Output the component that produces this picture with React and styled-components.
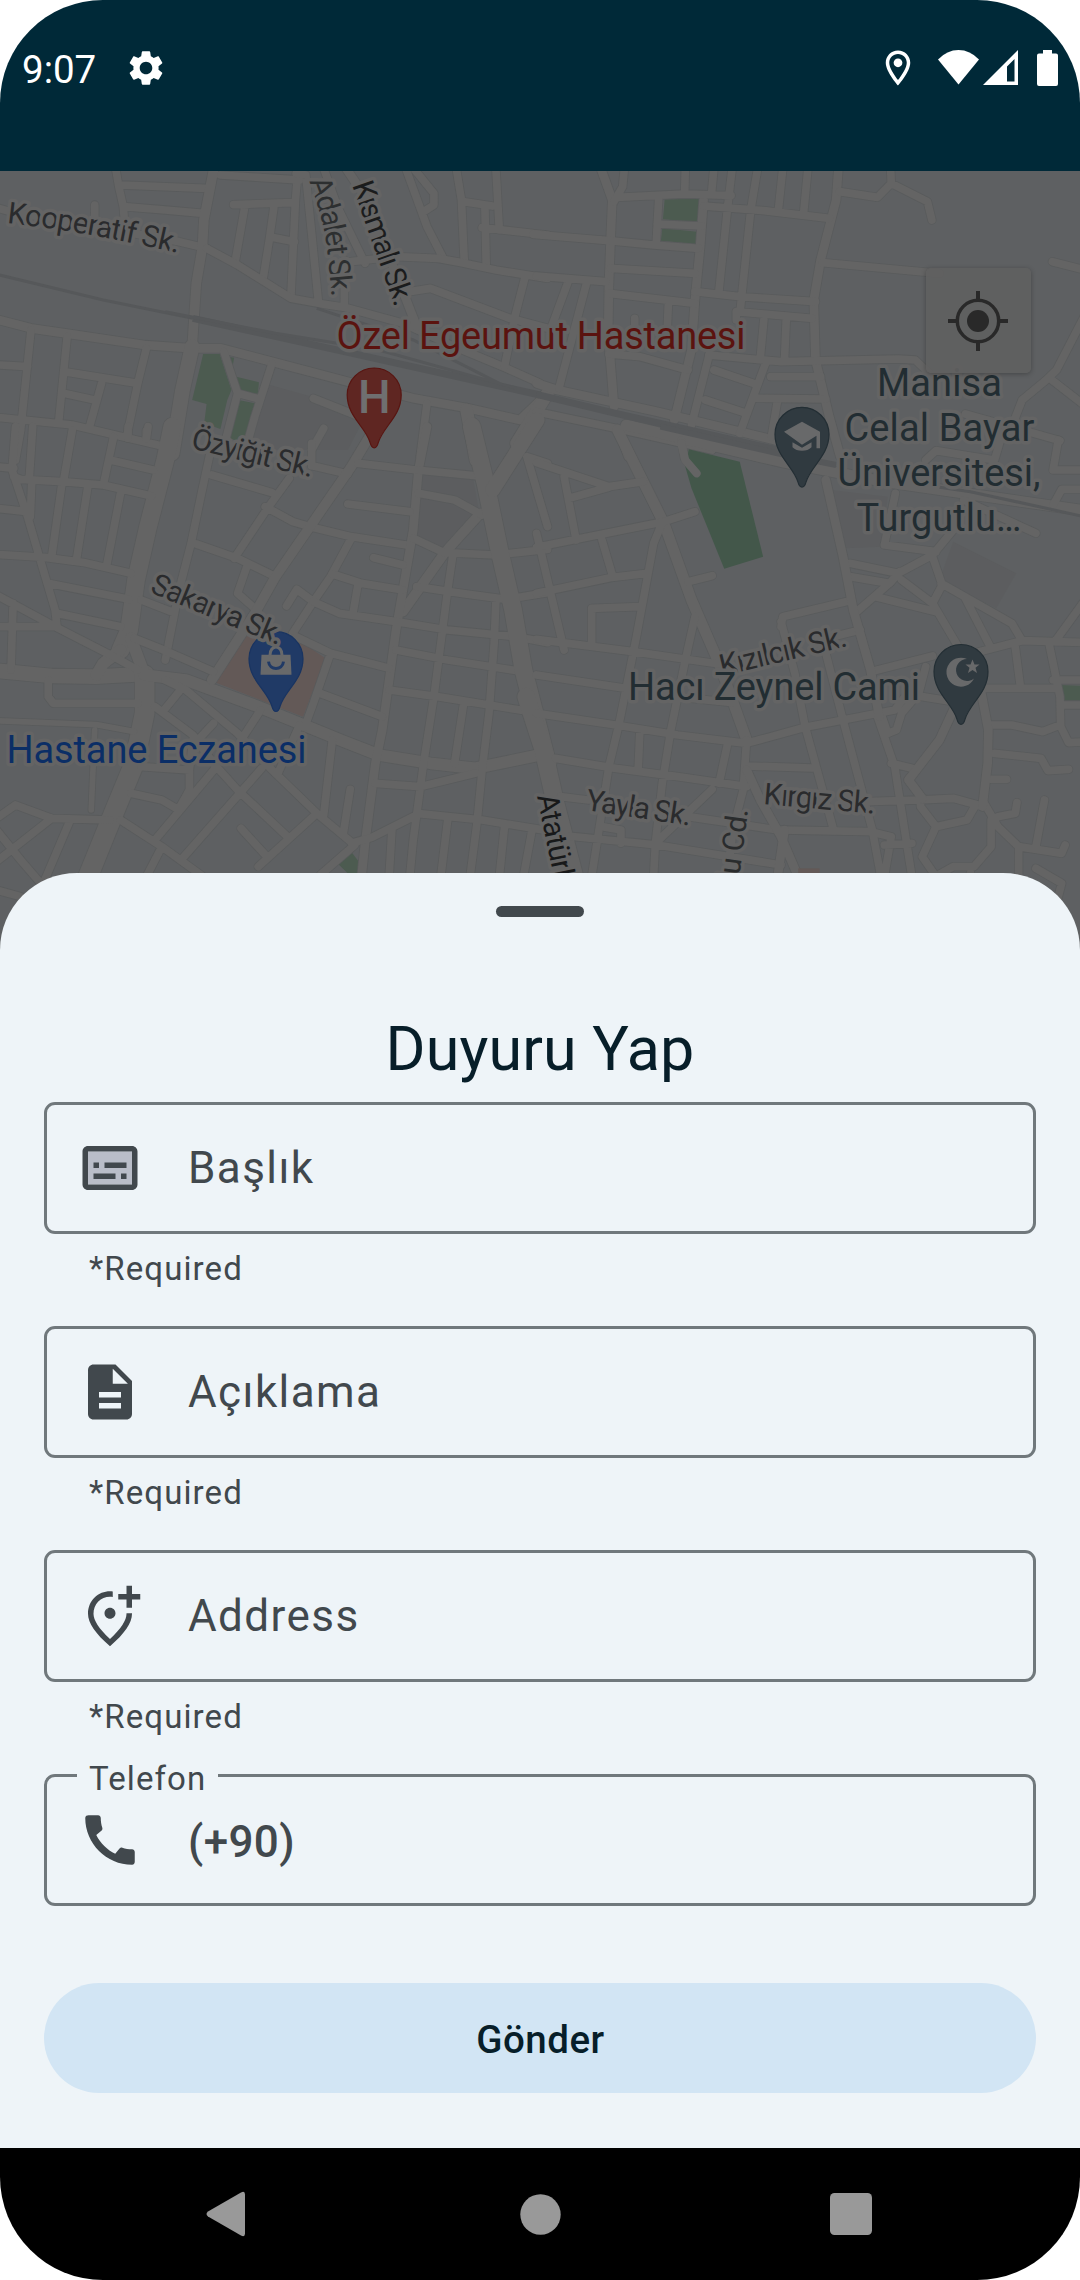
import React from "react";
import styled, { createGlobalStyle } from "styled-components";

const GlobalStyle = createGlobalStyle`
  *, *::before, *::after { box-sizing: border-box; }
  body { margin: 0; background: #ffffff; }
`;

const Screen = styled.div`
  width: 1080px;
  height: 2280px;
  display: flex;
  flex-direction: column;
  overflow: hidden;
  border-radius: 103px;
  font-family: Roboto, "Noto Sans", sans-serif;
  background: #ffffff;
`;

const StatusBar = styled.header`
  height: 171px;
  flex: none;
  display: flex;
  justify-content: space-between;
  align-items: flex-start;
  padding: 0 22px;
  background: #002938;
  color: #ffffff;
`;

const StatusGroup = styled.div`
  height: 135px;
  display: flex;
  align-items: center;
  gap: ${(p) => p.$gap}px;
`;

const Clock = styled.span`
  font-size: 38.5px;
  line-height: 46px;
  padding-top: 4px;
`;

const Icon = styled.svg`
  display: block;
  flex: none;
  width: ${(p) => p.$w}px;
  height: ${(p) => p.$h || p.$w}px;
  margin-left: ${(p) => p.$ml || 0}px;
  fill: currentColor;
`;

const Stage = styled.main`
  position: relative;
  flex: 1;
  display: flex;
  flex-direction: column;
  justify-content: flex-end;
  overflow: hidden;
  background: #5e6062;
`;

const MapCanvas = styled.svg`
  position: absolute;
  top: 0;
  left: 0;
  width: 1080px;
  height: 800px;
  display: block;
`;

const PlaceText = styled.text`
  font: 400 ${(p) => p.$size || 38}px Roboto, sans-serif;
  fill: ${(p) => p.$color};
  stroke: #646464;
  stroke-width: 7px;
  stroke-linejoin: round;
  paint-order: stroke;
`;

const LocateButton = styled.button`
  position: absolute;
  left: 926px;
  top: 97px;
  width: 105px;
  height: 105px;
  display: grid;
  place-items: center;
  padding: 0 1px 0 0;
  border: 0;
  border-radius: 5px;
  background: rgba(96, 96, 96, 0.93);
  color: #292929;
  box-shadow: 0 1px 5px rgba(0, 0, 0, 0.28);
`;

const Sheet = styled.section`
  position: relative;
  height: 1275px;
  display: flex;
  flex-direction: column;
  padding: 33px 44px 0;
  border-radius: 77px 77px 0 0;
  background: #eef4f8;
`;

const Handle = styled.div`
  align-self: center;
  width: 88px;
  height: 11px;
  border-radius: 6px;
  background: #41484d;
`;

const Title = styled.h1`
  margin: 94px 0 14px;
  font-size: 61px;
  line-height: 77px;
  font-weight: 400;
  letter-spacing: 0.15px;
  text-align: center;
  color: #071e29;
`;

const Form = styled.form`
  display: flex;
  flex-direction: column;
`;

const FieldBlock = styled.div`
  height: ${(p) => (p.$last ? 132 : 224)}px;
`;

const FieldBox = styled.label`
  position: relative;
  display: flex;
  align-items: center;
  gap: 45px;
  height: 132px;
  padding-left: 30px;
  border: 3px solid #70787c;
  border-radius: 11px;
  color: #41484d;
`;

const Placeholder = styled.span`
  font-size: 44px;
  line-height: 66px;
  letter-spacing: 1.42px;
`;

const Prefix = styled.span`
  padding-top: 3px;
  font-size: 44px;
  line-height: 66px;
  font-weight: 500;
  letter-spacing: 0.4px;
`;

const FloatingLabel = styled.span`
  position: absolute;
  left: 30px;
  top: -20px;
  padding: 0 12px;
  font-size: 33px;
  line-height: 44px;
  letter-spacing: 1.1px;
  background: #eef4f8;
`;

const Support = styled.div`
  padding: 13px 0 0 45px;
  font-size: 33px;
  line-height: 44px;
  letter-spacing: 1.1px;
  color: #41484d;
`;

const Submit = styled.button`
  height: 110px;
  margin-top: 77px;
  padding: 3px 0 0 1px;
  border: 0;
  border-radius: 55px;
  background: #d2e5f4;
  color: #071e29;
  font: 500 38.5px/50px Roboto, sans-serif;
  letter-spacing: 0.5px;
`;

const NavBar = styled.nav`
  height: 132px;
  flex: none;
  display: flex;
  justify-content: space-between;
  align-items: center;
  padding: 0 208px 0 206px;
  background: #000000;
  color: #999999;
`;

/* ---------- map data, one entry per map tile ---------- */

const TILES = [
  {
    transform: "translate(0 -171) scale(0.34436 0.33333)",
    roads: [
      [8, "M-20 620L30 635L520 725L600 745 M275 615V670 M335 500L345 560L358 620L362 670 M350 555L600 565 M360 620L480 630L590 640 M640 525L870 540 M865 515L858 600L845 885 M678 614L850 608 M710 625L683 785 M795 625L782 720L765 830 M790 712L855 725"],
      [10, "M622 500L592 660L588 740L570 850L558 1040"],
      [8, "M600 745L690 795L760 840L845 895L925 910L1000 922L1170 970L1320 1040L1460 1100L1568 1150 M860 520L888 525L905 700L925 910 M940 505L980 620L1060 790 M1000 780V920 M1180 510L1240 680L1285 770 M1205 510L1260 580V615L1230 635 M1325 505L1340 600L1348 780 M1345 605L1430 618 M1440 505L1450 690 M1408 615L1412 800 M1400 683L1590 705"],
      [9, "M1005 505L1060 590L1180 900L1210 980"],
      [8, "M1020 785L1150 770L1270 775L1340 788L1440 810L1590 835 M1190 875L1250 865L1480 955L1590 985 M1525 830L1495 950L1465 1100"],
      [9, "M-10 958L90 985L190 1000L420 1035L560 1045L640 1045L790 1085L1010 1145L1200 1195L1360 1225L1510 1260L1590 1180"],
      [8, "M90 990L60 1290L45 1380 M195 1010L170 1270 M425 1045L400 1150L370 1300 M0 1095L80 1100 M185 1115L400 1150 M185 1180L275 1200 M295 1150L260 1280 M-10 1252L210 1275L480 1340 M425 1292V1320 M650 1055L690 1180L650 1340 M690 1180L745 1195 M790 1090L740 1250L710 1360 M910 1195L1020 1240L1080 1270 M940 1285L905 1350 M1240 1210L1220 1370"],
      [15, "M558 1040L530 1170L500 1360"],
      [13, "M1355 1230L1382 1380 M1590 1180L1500 1330"],
    ],
    rail: [[3, "M-10 823L300 900L560 955"], [7, "M560 955L1000 1055L1568 1185"], [3, "M480 935L800 1000L1100 1050L1500 1165 M920 925L1200 1020L1450 1150"]],
    parks: ["590,1062 638,1062 672,1170 660,1200 640,1287 593,1270 600,1212 558,1200", "663,1070 680,1073 676,1095", "686,1130 752,1147 748,1188 690,1170", "682,1198 740,1210 720,1310 690,1325 660,1310"],
  },
  {
    transform: "translate(540 -171) scale(0.34436 0.33333)",
    roads: [
      [9, "M175 500L210 600L205 720L200 860L198 1000L215 1220 M475 600L465 740L450 900L440 1050L390 1260 M867 500L860 600L815 780L795 900L800 1080L840 1250L872 1370 M-10 1150L50 1170L340 1235L680 1320L800 1350"],
      [8, "M245 505L240 560L215 605 M225 592L420 582L555 586 M422 505L420 582 M505 505L498 582 M558 505L545 620L520 870 M632 505L612 630L582 925 M705 505L692 632 M778 505L765 645 M475 618L650 632L840 655 M345 590L338 720 M340 672L470 678 M-20 703L200 722L330 735L460 745 M870 575L980 592L1020 550L1125 605L1138 660 M1018 500L1020 550 M820 788L1160 820 M205 805L450 820 M-10 828L190 845 M80 850L30 990 M135 850L55 1165 M200 880L450 910 M450 875L580 890L800 905 M373 905L370 975 M275 955V1010 M570 935L790 955 M570 935V960 M650 960L640 1070 M715 960L710 1080 M490 1065L700 1085L1040 1077L1090 1080L1135 1125 M200 1062L290 1070L430 1110 M490 1070L440 1275 M655 1090L580 1300 M505 1110L620 1150 M670 1130L815 1130 M630 1195L830 1197 M480 1200L600 1240 M690 1200L672 1310 M-10 1235L220 1285L500 1350 M225 1285L255 1370 M1488 785L1590 812 M1590 930L1500 1110L1470 1140L1400 1200L1370 1280 M1480 1135L1580 1215 M1235 1242L1510 1322"],
    ],
    rail: [[7, "M-10 1183L220 1240L690 1350"]],
    parks: ["362,598 465,597 462,667 357,658", "355,685 457,695 455,733 351,722"],
  },
  {
    transform: "translate(0 259) scale(0.34436 0.33333)",
    roads: [
      [18, "M500 -10L480 90L430 290L395 450L375 600L350 660"],
      [15, "M-10 722L150 738L280 740L420 732"],
      [20, "M420 735L420 850L390 1000L330 1150L240 1380"],
      [12, "M350 660L300 700L280 735 M420 735L540 750L750 830L870 880L1000 935L1100 975L1250 1000L1380 1015L1590 970 M380 625L420 735"],
      [8, "M45 -10L35 120L80 260L120 400L160 540L165 585 M95 -10L85 145 M-10 110L40 115 M40 140L60 148L180 155L300 165L440 198 M210 0L185 150 M330 20L300 165 M372 -10V25 M430 -10L425 25 M320 90L445 120 M180 160L150 380 M255 170L222 390 M350 190L310 405 M92 160L88 260 M-10 235L80 245 M-10 373L130 382L240 397L380 430 M140 460L375 508 M165 550L350 590 M-10 495L160 590L330 680L400 720 M-10 590H165 M38 520L32 720 M140 750V800L155 820H400 M410 510L505 548 M612 60L585 190L555 340L520 480L480 690 M615 135L790 188 M840 145L780 230L680 385 M910 108L1010 132 M905 40V108 M770 230L850 275L900 290L1020 320L1180 345 M570 342L690 385L800 440 M720 400L690 490L745 540 M832 528L862 478L910 515 M1020 325L960 440L910 515L850 610"],
      [10, "M1090 -10L1020 110L900 290L800 440L740 550L615 750 M1395 250L1290 370L1170 545"],
      [9, "M1240 -10L1215 120L1200 300L1180 420L1150 600L1130 750L1110 900L1090 1000L1060 1240L1050 1340"],
      [8, "M910 515L985 550L1150 575L1300 600L1500 620L1590 638 M965 432L1050 460L1170 480 M1040 460L1025 550 M1085 383L1170 405 M1010 222L1190 245 M1040 100L1210 120L1390 138 M1215 190L1320 210L1400 255 M1200 325L1290 368L1440 375L1590 358 M1210 470L1340 490L1470 508L1590 488 M1315 375L1300 480L1285 600L1260 800L1230 1000L1200 1230L1190 1340 M1530 80L1590 290 M1530 80L1590 100 M1440 510L1435 640L1420 850L1400 1020L1385 1180L1365 1340 M1150 660L1300 690L1520 725 M1130 780L1270 800L1540 845 M1345 830L1320 1000 M860 620L960 670L1130 715 M960 670L910 820L885 890 M930 790L1110 860 M390 625L480 662L620 725 M757 840L700 930 M870 885L805 1035 M450 830L560 915L620 1000L690 1080L840 1225 M480 750L540 780L690 910L790 1020L920 1150L1030 1245 M520 785L475 842 M620 880L575 930 M410 1010L550 1020L560 930 M550 1020V1080L520 1135 M625 1015L450 1230 M760 1015L530 1285 M920 1150L750 1310 M380 1090L470 1110L520 1140 M350 1170L470 1250L590 1340 M470 1250L420 1350 M700 1195L775 1280 M965 930L940 1155 M1017 1078L997 1210 M1020 1240L1080 1222L1210 1155 M1030 1245L930 1335 M1090 1060L1220 1070L1380 1030 M1210 1150L1400 1170L1590 1202 M1138 1200L1130 1340 M1300 1170L1280 1340 M1465 1190L1450 1340 M1545 1200L1520 1340 M-10 1165L45 1125L150 1165L320 1170 M-10 1295L150 1165 M-10 1200L60 1290L110 1350 M200 1180L130 1350 M-10 1380L60 1400"],
      [6, "M-10 872L280 884L390 905 M275 900L265 1140"],
      [18, "M1370 -10L1410 160L1450 360L1490 540L1520 720L1590 1000"],
      [15, "M1560 -30L1430 180"],
    ],
    rail: [],
    parks: ["980,1300 1020,1265 1042,1295 1038,1335 1015,1335"],
  },
  {
    transform: "translate(540 259) scale(0.34436 0.33333)",
    roads: [
      [11, "M225 0L360 280L440 510L520 700L600 930 M250 -15L700 95L1000 155L1568 240"],
      [18, "M-40 800L10 960L45 1120L110 1380"],
      [8, "M410 30L420 85L455 130 M-10 98L200 170L300 155 M70 140L105 330 M85 205L200 172 M-10 352L360 275L450 245 M180 330L210 435 M-10 490L210 442L310 430 M350 290L330 340L280 620L230 880L200 1010L150 1340 M430 455L500 437 M-10 310L70 660 M150 645V535L290 530 M-10 628L270 665L520 702 M450 560L420 700L380 900L355 1060L335 1240L330 1340 M-10 735L250 775 M-10 850L220 885L400 915L600 940 M390 800L560 818 M600 940L770 892L1030 840L1060 800 M290 900L285 1020 M45 985L220 1015L400 1040L600 1070 M545 940L520 1060 M600 930L590 1080L560 1200L545 1340 M600 1008L790 1014 M770 890L850 1190 M880 870L965 1200L990 1340 M980 860L1030 1010L1080 1340 M700 1200L960 1205L1020 1220L1000 1340 M1000 1245L1080 1240 M950 1115L1100 1110L1200 1105L1290 1130 M430 1160L690 1200 M500 1078L340 1235 M60 1100L140 1110 M80 1218L340 1245L700 1305 M180 1190L235 1200V1240 M900 400L1040 430L1140 375L1200 300 M900 440L1015 460L1045 425 M1140 380L1168 465L1140 520 M1050 450L1140 520L1220 660 M920 545L1020 455 M975 500L1150 545 M700 590L705 560L900 512 M700 575L740 730L770 890 M830 670L880 870 M850 620L930 600 M960 725L1140 678 M1165 460L1370 580L1400 632L1590 638 M1235 505L1310 655 M1220 680L1400 632 M1495 635L1590 500 M1380 650L1395 770 M1478 640L1510 800L1512 890L1535 938L1590 935 M1290 775H1500 M1490 750H1590 M1515 825H1590 M1310 885L1370 885L1460 905L1510 885 M1320 970L1455 985L1475 1022L1535 1018 M1310 1048H1355 M1020 1000L1080 1015 M1110 800L1200 815 M1120 710L1100 790L1050 850L1035 900L1010 910L990 850 M1105 1100V1130L1150 1190L1240 1170L1265 1125 M1150 1190L1110 1280L1150 1340 M1290 1120L1330 1190L1390 1250V1340 M1330 1160L1380 1150L1385 1118 M1465 1110L1440 1250 M1390 1250L1515 1270L1525 1245 M1310 1170V1250L1260 1310L1200 1310L1130 1350 M1250 1330L1240 1400 M1032 190L1000 345L1150 365 M1120 90L1150 62L1320 90L1340 20 M1505 30L1490 120H1590 M1490 225L1515 178H1590 M1230 210L1440 310 M1440 1315L1515 1360L1500 1420"],
      [9, "M600 1020L640 1110L700 1220L750 1340 M710 1200L690 1340 M830 150L880 380L910 540L960 720L985 860 M1280 780L1302 900L1300 1000L1285 1130 M1205 830L1160 930L1070 1050L1110 1105"],
    ],
    rail: [[6, "M350 -10L690 70L860 105"], [3, "M1160 172L1250 185L1590 262"]],
    parks: ["1510,765 1590,768 1590,815 1520,818"],
  },
];

const STREETS = [
  ["kooperatif", "M7 52Q90 61 190 85", "Kooperatif Sk.", "#2a2b2d", 174],
  ["adalet", "M309 10Q323 46 327 76L333 140", "Adalet Sk.", "#2d2f30", 119],
  ["kismali", "M352 14L402 156", "Kısmalı Sk.", "#1b1c1d", 130],
  ["ozyigit", "M190 277L335 312", "Özyiğit Sk.", "#2a2b2d", 125],
  ["sakarya", "M149 421L290 479", "Sakarya Sk.", "#2a2b2d", 140],
  ["kizilcik", "M722 505L865 471", "Kızılcık Sk.", "#2a2b2d", 130],
  ["yayla", "M585 639L705 657", "Yayla Sk.", "#2a2b2d", 106],
  ["kirgiz", "M763 633L890 644", "Kırgız Sk.", "#2a2b2d", 112],
  ["ataturk", "M537 625L563 751", "Atatürk", "#18191a", 92],
  ["cadde", "M738.500 711L750 625", "lu Cd.", "#2a2c2d", 73],
];

const HOSPITAL = "#5b130f";
const SLATE = "#222d32";

const PLACES = [
  ["Özel Egeumut Hastanesi", 541, 177.5, 409, HOSPITAL],
  ["Hastane Eczanesi", 156.500, 591.7, 300, "#0b2e66"],
  ["Manisa", 939.5, 224.7, 125, SLATE],
  ["Celal Bayar", 939.5, 269.7, 190, SLATE],
  ["Üniversitesi,", 939, 314.7, 203, SLATE],
  ["Turgutlu…", 939, 359.7, 165, SLATE],
  ["Hacı Zeynel Cami", 774, 529.3, 292, SLATE],
];

const PIN =
  "M0 52.800c-2.400 0-3.200-2-4-5C-8.500 32-27 21.500-27 0a27 27 0 0 1 54 0C27 21.500 8.500 32 4 47.800c-.8 3-1.600 5-4 5z";

function Pin({ x, y, fill, edge, children }) {
  return (
    <g transform={`translate(${x} ${y})`}>
      <path d={PIN} fill={fill} stroke={edge} strokeWidth="1.2" />
      {children}
    </g>
  );
}

function CityMap() {
  return (
    <MapCanvas viewBox="0 0 1080 800">
      <rect width="1080" height="800" fill="#5e6062" />
      <g fill="#5c5d5f">
        <g transform={TILES[0].transform}>
          <polygon points="785,1155 905,1190 1060,1250 1010,1350 700,1350 740,1250" />
        </g>
        <g transform={TILES[3].transform}>
          <polygon points="1200,335 1383,430 1325,535 1160,450" />
          <polygon points="845,180 1010,200 990,350 885,355" />
        </g>
        <g transform={TILES[2].transform}>
          <polygon points="1225,130 1375,150 1390,240 1290,370 1205,310" />
        </g>
      </g>
      {TILES.map((t, i) => (
        <g key={i} transform={t.transform} fill="#4c5b50">
          {t.parks.map((p) => (
            <polygon key={p} points={p} />
          ))}
        </g>
      ))}
      <g transform={TILES[2].transform}>
        <polygon points="715,610 880,640 945,685 880,860 620,755" fill="#635957" />
      </g>
      {["casing", "fill"].map((layer) => (
        <g key={layer} fill="none" strokeLinecap="round" strokeLinejoin="round" stroke={layer === "casing" ? "#595b5c" : "#646464"}>
          {TILES.map((t, i) => (
            <g key={i} transform={t.transform}>
              {t.roads.map(([w, d], k) => (
                <path key={k} d={d} strokeWidth={layer === "casing" ? w + 1.3 : w - 0.3} vectorEffect="non-scaling-stroke" />
              ))}
            </g>
          ))}
        </g>
      ))}
      <g fill="none" stroke="#56585a">
        {TILES.map((t, i) => (
          <g key={i} transform={t.transform}>
            {t.rail.map(([w, d]) => (
              <path key={d} d={d} strokeWidth={w} vectorEffect="non-scaling-stroke" />
            ))}
          </g>
        ))}
      </g>
      <g transform={TILES[3].transform}>
        <polygon points="432,58 580,95 648,380 535,416 440,175 422,110" fill="#43574a" />
        <path d="M410 40L422 90L455 130" fill="none" stroke="#646464" strokeWidth="8" strokeLinecap="round" vectorEffect="non-scaling-stroke" />
        <rect x="750" y="1315" width="62" height="25" fill="#635957" />
      </g>

      <Pin x={374.200} y={224} fill="#5f2622" edge="#581511">
        <text x="0" y="17.700" textAnchor="middle" fontFamily="Roboto" fontWeight="500" fontSize="46" fill="#6f6f70">H</text>
      </Pin>
      <Pin x={802} y={263.300} fill="#303a40" edge="#232e34">
        <path d="M-18-2.500L0-12.500L18-2.500V14H14.500V1.500L0 10.500z M-9.500 8L0 13.500L9.500 8V13Q6 16.500 0 16.500T-9.500 13z" fill="#68696a" />
      </Pin>
      <Pin x={276} y={487.700} fill="#203a66" edge="#193461">
        <path d="M-14.500-4H14.500L15.500 16H-15.500z" fill="#68696a" />
        <path d="M-6-3.500C-6-14.500 6-14.500 6-3.500" fill="none" stroke="#68696a" strokeWidth="3" />
        <path d="M-7.500 3C-6.500 12 6.500 12 7.500 3" fill="none" stroke="#203a66" strokeWidth="3" />
      </Pin>
      <Pin x={961} y={500.500} fill="#303a40" edge="#232e34">
        <path d="M6-12.500A14.500 14.500 0 1 0 13 7A11 11 0 1 1 6-12.500z" fill="#68696a" />
        <path d="M11.500-12l2 5h5l-4 3.300 1.500 5.200-4.500-3-4.500 3 1.500-5.200-4-3.300h5z" fill="#68696a" />
      </Pin>

      <defs>
        {STREETS.map(([id, d]) => (
          <path key={id} id={id} d={d} />
        ))}
      </defs>
      {STREETS.map(([id, , name, color, len]) => (
        <PlaceText key={id} $size={30} $color={color}>
          <textPath href={`#${id}`} textLength={len}>{name}</textPath>
        </PlaceText>
      ))}
      {PLACES.map(([name, x, y, len, color]) => (
        <PlaceText key={name} x={x} y={y} textAnchor="middle" textLength={len} $color={color}>
          {name}
        </PlaceText>
      ))}
    </MapCanvas>
  );
}

/* ---------- form icons, 24-unit grid ---------- */

const ICONS = {
  subtitles: (
    <>
      <path d="M4 6h16v12H4z" fill="#b9bdc8" />
      <path d="M20 4H4c-1.100 0-2 .9-2 2v12c0 1.100.9 2 2 2h16c1.100 0 2-.9 2-2V6c0-1.100-.9-2-2-2zm0 14H4V6h16v12zM6 10h2v2H6zm0 4h8v2H6zm10 0h2v2h-2zm-6-4h8v2h-8z" />
    </>
  ),
  description: (
    <path d="M14 2H6c-1.100 0-1.990.9-1.990 2L4 20c0 1.100.89 2 1.990 2H18c1.100 0 2-.9 2-2V8l-6-6zm2 16H8v-2h8v2zm0-4H8v-2h8v2zm-3-5V3.500L18.500 9H13z" />
  ),
  addLocation: (
    <path d="M20 1v3h3v2h-3v3h-2V6h-3V4h3V1h2zM12 13c1.100 0 2-.9 2-2s-.9-2-2-2-2 .9-2 2 .9 2 2 2zM13 3.060V5.080C12.670 5.030 12.340 5 12 5c-3.350 0-6 2.570-6 6.200 0 2.340 1.950 5.440 6 9.140 4.050-3.700 6-6.790 6-9.140V11h2v.2c0 3.320-2.670 7.250-8 11.800-5.330-4.550-8-8.480-8-11.800C4 6.220 7.800 3 12 3c.34 0 .67.020 1 .060z" />
  ),
  call: (
    <path d="M20.010 15.380c-1.230 0-2.420-.2-3.530-.56-.35-.12-.74-.03-1.010.24l-1.570 1.970c-2.830-1.350-5.480-3.900-6.890-6.830l1.950-1.660c.27-.28.35-.67.24-1.020-.37-1.110-.56-2.300-.56-3.530 0-.54-.45-.99-.99-.99H4.190C3.650 3 3 3.240 3 3.990 3 13.280 10.730 21 20.010 21c.71 0 .99-.63.99-1.180v-3.450c0-.54-.45-.99-.99-.99z" />
  ),
};

function FieldIcon({ name }) {
  return (
    <Icon $w={66} viewBox="0 0 24 24">
      {ICONS[name]}
    </Icon>
  );
}

function RequiredField({ icon, label }) {
  return (
    <FieldBlock>
      <FieldBox>
        <FieldIcon name={icon} />
        <Placeholder>{label}</Placeholder>
      </FieldBox>
      <Support>*Required</Support>
    </FieldBlock>
  );
}

export default function App() {
  return (
    <>
      <GlobalStyle />
      <Screen>
        <StatusBar>
          <StatusGroup $gap={29}>
            <Clock>9:07</Clock>
            <Icon $w={42} viewBox="0 0 24 24">
              <path d="M19.140 12.940c.04-.3.06-.61.06-.94 0-.32-.02-.64-.07-.94l2.030-1.580c.18-.14.23-.41.12-.61l-1.920-3.320c-.12-.22-.37-.29-.59-.22l-2.390.96c-.5-.38-1.030-.7-1.620-.94l-.36-2.540c-.04-.24-.24-.41-.48-.41h-3.840c-.24 0-.43.17-.47.41l-.36 2.540c-.59.24-1.130.57-1.620.94l-2.390-.96c-.22-.08-.47 0-.59.22L2.740 8.870c-.12.21-.08.47.12.61l2.030 1.580c-.05.3-.09.63-.09.94s.02.64.07.94l-2.030 1.580c-.18.14-.23.41-.12.61l1.920 3.320c.12.22.37.29.59.22l2.390-.96c.5.38 1.030.7 1.620.94l.36 2.540c.05.24.24.41.48.41h3.840c.24 0 .44-.17.47-.41l.36-2.540c.59-.24 1.130-.56 1.620-.94l2.390.96c.22.08.47 0 .59-.22l1.920-3.320c.12-.22.07-.47-.12-.61l-2.010-1.580zM12 15.600c-1.980 0-3.600-1.620-3.600-3.600s1.620-3.600 3.600-3.600 3.600 1.620 3.600 3.600-1.620 3.600-3.600 3.600z" />
            </Icon>
          </StatusGroup>
          <StatusGroup $gap={0}>
            <Icon $w={42} viewBox="0 0 24 24">
              <path d="M12 2C8.130 2 5 5.130 5 9c0 5.250 7 13 7 13s7-7.750 7-13c0-3.870-3.130-7-7-7zM7 9c0-2.760 2.240-5 5-5s5 2.240 5 5c0 2.880-2.880 7.190-5 9.880C9.920 16.210 7 11.850 7 9z" />
              <circle cx="12" cy="9" r="2.500" />
            </Icon>
            <Icon $w={41} $h={35} $ml={19} viewBox="0 0 41 35">
              <path d="M20.500 34.500L0 9.500Q9 0 20.500 0T41 9.500z" />
            </Icon>
            <Icon $w={35} $h={35} $ml={3.500} viewBox="0 0 35 35">
              <path fillRule="evenodd" d="M35 0V35H0z M31.500 9L24 16.500V31.500H31.500z" />
            </Icon>
            <Icon $w={21} $h={36} $ml={19.500} viewBox="0 0 21 36">
              <path d="M6 0h9v3.500h4a2 2 0 0 1 2 2V34a2 2 0 0 1-2 2H2a2 2 0 0 1-2-2V5.500a2 2 0 0 1 2-2h4z" />
            </Icon>
          </StatusGroup>
        </StatusBar>

        <Stage>
          <CityMap />
          <LocateButton type="button" aria-label="Konumum">
            <Icon $w={60} viewBox="0 0 60 60">
              <circle cx="30" cy="30" r="11" />
              <circle cx="30" cy="30" r="20.700" fill="none" stroke="currentColor" strokeWidth="3.500" />
              <path d="M28 0h4v9h-4z M28 51h4v9h-4z M0 28h9v4H0z M51 28h9v4h-9z" />
            </Icon>
          </LocateButton>

          <Sheet>
            <Handle />
            <Title>Duyuru Yap</Title>
            <Form>
              <RequiredField icon="subtitles" label="Başlık" />
              <RequiredField icon="description" label="Açıklama" />
              <RequiredField icon="addLocation" label="Address" />
              <FieldBlock $last>
                <FieldBox>
                  <FloatingLabel>Telefon</FloatingLabel>
                  <FieldIcon name="call" />
                  <Prefix>(+90)</Prefix>
                </FieldBox>
              </FieldBlock>
              <Submit type="button">Gönder</Submit>
            </Form>
          </Sheet>
        </Stage>

        <NavBar>
          <Icon $w={40} $h={46} viewBox="0 0 40 46">
            <path d="M35 1.500Q39-.5 39 3.500V42.500Q39 46.500 35 44.500L2 25.500Q-1 23 2 20.500z" />
          </Icon>
          <Icon $w={41} $ml={4} viewBox="0 0 41 41">
            <circle cx="20.500" cy="20.500" r="20.200" />
          </Icon>
          <Icon $w={42} viewBox="0 0 42 42">
            <rect width="42" height="42" rx="4.500" />
          </Icon>
        </NavBar>
      </Screen>
    </>
  );
}
